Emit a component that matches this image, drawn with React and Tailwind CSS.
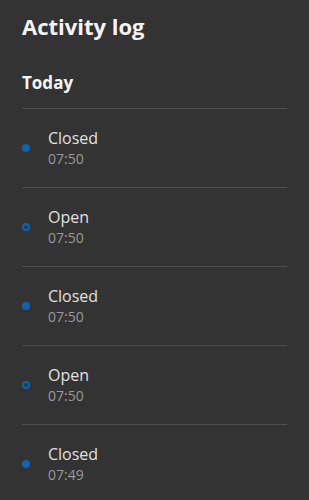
import React from 'react'

const entries = [
  { state: 'Closed', time: '07:50' },
  { state: 'Open', time: '07:50' },
  { state: 'Closed', time: '07:50' },
  { state: 'Open', time: '07:50' },
  { state: 'Closed', time: '07:49' },
]

const Dot = ({ open }) =>
  open ? (
    <div className="w-[8px] h-[8px] rounded-full border-2 border-[#1262b3] bg-[#1d3a57]"></div>
  ) : (
    <div className="w-[8px] h-[8px] rounded-full bg-[#1262b3]"></div>
  )

const App = () => {
  return (
    <div className="min-h-[500px] bg-[#333333] px-[22px] text-white font-['Open_Sans',sans-serif]">
      <h1 className="pt-[8px] text-[22px] leading-[36px] font-bold text-[#f5f5f5]">Activity log</h1>
      <h2 className="mt-[27px] text-[17px] leading-[24px] font-bold text-[#f5f5f5]">Today</h2>

      <div className="mt-[13px]">
        {entries.map((e, i) => (
          <div key={i} className="h-[79px] border-t border-[#4f4f4f] flex items-center">
            <div className="w-[26px] flex">
              <Dot open={e.state === 'Open'} />
            </div>
            <div className="flex flex-col">
              <span className="text-[16px] leading-[21px] text-[#e0e0e0]">{e.state}</span>
              <span className="text-[14px] leading-[19px] text-[#9a9a9a]">{e.time}</span>
            </div>
          </div>
        ))}
      </div>
    </div>
  )
}

export default App
